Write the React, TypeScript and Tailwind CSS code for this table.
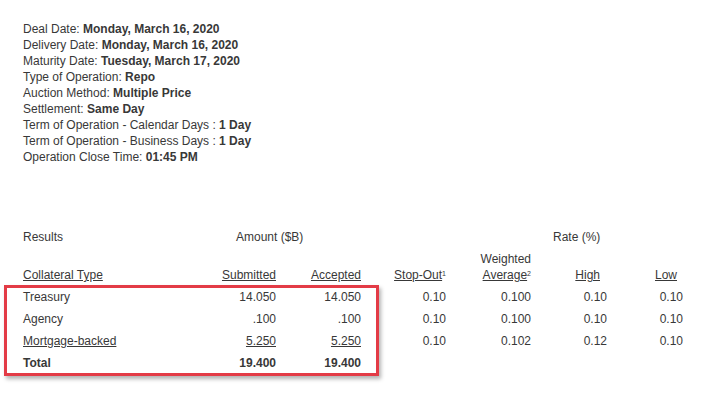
import React from "react";

const font = { fontFamily: '"Liberation Sans", Arial, sans-serif' };

function InfoLine({ label, value }: { label: string; value: string }) {
  return (
    <div className="h-4 leading-4">
      {label} <span className="font-bold">{value}</span>
    </div>
  );
}

type Row = {
  name: string;
  sub: string;
  acc: string;
  so?: string;
  wa?: string;
  hi?: string;
  lo?: string;
  link?: boolean;
  bold?: boolean;
};

const rows: Row[] = [
  { name: "Treasury", sub: "14.050", acc: "14.050", so: "0.10", wa: "0.100", hi: "0.10", lo: "0.10" },
  { name: "Agency", sub: ".100", acc: ".100", so: "0.10", wa: "0.100", hi: "0.10", lo: "0.10" },
  { name: "Mortgage-backed", sub: "5.250", acc: "5.250", so: "0.10", wa: "0.102", hi: "0.12", lo: "0.10", link: true },
  { name: "Total", sub: "19.400", acc: "19.400", bold: true },
];

const cols = "grid grid-cols-[173px_80px_85px_85px_85px_76px_76px]";

export default function App() {
  return (
    <div className="w-[718px] h-[399px] bg-white text-[12px] text-[#383838] overflow-hidden" style={font}>
      <div className="pl-[23px] pt-[21px]">
        <InfoLine label="Deal Date:" value="Monday, March 16, 2020" />
        <InfoLine label="Delivery Date:" value="Monday, March 16, 2020" />
        <InfoLine label="Maturity Date:" value="Tuesday, March 17, 2020" />
        <InfoLine label="Type of Operation:" value="Repo" />
        <InfoLine label="Auction Method:" value="Multiple Price" />
        <InfoLine label="Settlement:" value="Same Day" />
        <InfoLine label="Term of Operation - Calendar Days :" value="1 Day" />
        <InfoLine label="Term of Operation - Business Days :" value="1 Day" />
        <InfoLine label="Operation Close Time:" value="01:45 PM" />
      </div>

      <div className="relative mt-[64px]">
        <div className="pl-[23px] flex h-4 leading-4">
          <span className="w-[213px]">Results</span>
          <span className="w-[317px]">Amount ($B)</span>
          <span>Rate (%)</span>
        </div>
        <div className={`${cols} pl-[23px] mt-[6px] leading-4`}>
          <div className="self-end underline">Collateral Type</div>
          <div className="self-end text-right underline">Submitted</div>
          <div className="self-end text-right underline">Accepted</div>
          <div className="self-end text-right">
            <span className="underline">Stop-Out</span>
            <sup className="text-[7px]">1</sup>
          </div>
          <div className="self-end text-right">
            <div>Weighted</div>
            <div>
              <span className="underline">Average</span>
              <sup className="text-[7px]">2</sup>
            </div>
          </div>
          <div className="self-end text-right pr-[7px] underline">High</div>
          <div className="self-end text-right pr-[6px] underline">Low</div>
        </div>
        <div className="mt-[3px] pl-[23px]">
          {rows.map((r) => (
            <div key={r.name} className={`${cols} h-[22px] items-center ${r.bold ? "font-bold" : ""}`}>
              <div className={r.link ? "underline" : ""}>{r.name}</div>
              <div className={`text-right ${r.link ? "underline" : ""}`}>{r.sub}</div>
              <div className={`text-right ${r.link ? "underline" : ""}`}>{r.acc}</div>
              <div className="text-right">{r.so}</div>
              <div className="text-right">{r.wa}</div>
              <div className="text-right">{r.hi}</div>
              <div className="text-right">{r.lo}</div>
            </div>
          ))}
        </div>
        <div className="absolute left-[4px] top-[56px] w-[375px] h-[91px] border-[3px] border-[#e33b46] shadow-[2px_3px_4px_rgba(0,0,0,0.3)] pointer-events-none" />
      </div>
    </div>
  );
}
